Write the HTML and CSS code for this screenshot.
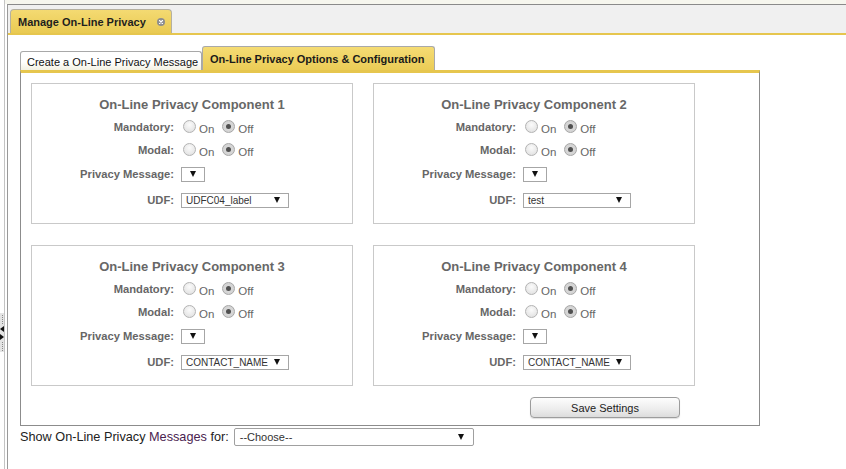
FILE: index.html
```html
<!DOCTYPE html>
<html lang="en">
<head>
<meta charset="utf-8">
<title>Manage On-Line Privacy</title>
<link rel="stylesheet" href="styles.css">
</head>
<body>
<div class="app">
  <div class="splitter">
    <div class="handle">
      <span class="dots"></span>
      <span class="arr arr-left"></span>
      <span class="arr arr-right"></span>
      <span class="dots"></span>
    </div>
  </div>
  <div class="frame">
    <div class="tabbar">
      <div class="main-tab">
        <span class="main-tab-label">Manage On-Line Privacy</span>
        <span class="close-icon">
          <svg width="8" height="8" viewBox="0 0 8 8"><circle cx="4" cy="4" r="4" fill="#8e8e8e"/><path d="M2.5 2.5 L5.5 5.5 M5.5 2.5 L2.5 5.5" stroke="#fff" stroke-width="1.1" stroke-linecap="round"/></svg>
        </span>
      </div>
    </div>
    <div class="content">
      <div class="subtabs">
        <div class="subtab">Create a On-Line Privacy Message</div>
        <div class="subtab active">On-Line Privacy Options &amp; Configuration</div>
      </div>
      <div class="panel">
        <div class="grid">
          <div class="comp">
            <div class="comp-title">On-Line Privacy Component 1</div>
            <div class="row r-radio"><span class="lbl">Mandatory:</span><span class="val"><span class="radio"></span><span class="opt">On</span><span class="radio checked"></span><span class="opt">Off</span></span></div>
            <div class="row r-radio"><span class="lbl">Modal:</span><span class="val"><span class="radio"></span><span class="opt">On</span><span class="radio checked"></span><span class="opt">Off</span></span></div>
            <div class="row r-sel"><span class="lbl">Privacy Message:</span><span class="val"><span class="sel sel-sm"><span class="tri"></span></span></span></div>
            <div class="row r-sel"><span class="lbl">UDF:</span><span class="val"><span class="sel sel-md"><span class="sel-text">UDFC04_label</span><span class="tri"></span></span></span></div>
          </div>
          <div class="comp">
            <div class="comp-title">On-Line Privacy Component 2</div>
            <div class="row r-radio"><span class="lbl">Mandatory:</span><span class="val"><span class="radio"></span><span class="opt">On</span><span class="radio checked"></span><span class="opt">Off</span></span></div>
            <div class="row r-radio"><span class="lbl">Modal:</span><span class="val"><span class="radio"></span><span class="opt">On</span><span class="radio checked"></span><span class="opt">Off</span></span></div>
            <div class="row r-sel"><span class="lbl">Privacy Message:</span><span class="val"><span class="sel sel-sm"><span class="tri"></span></span></span></div>
            <div class="row r-sel"><span class="lbl">UDF:</span><span class="val"><span class="sel sel-md"><span class="sel-text">test</span><span class="tri"></span></span></span></div>
          </div>
          <div class="comp">
            <div class="comp-title">On-Line Privacy Component 3</div>
            <div class="row r-radio"><span class="lbl">Mandatory:</span><span class="val"><span class="radio"></span><span class="opt">On</span><span class="radio checked"></span><span class="opt">Off</span></span></div>
            <div class="row r-radio"><span class="lbl">Modal:</span><span class="val"><span class="radio"></span><span class="opt">On</span><span class="radio checked"></span><span class="opt">Off</span></span></div>
            <div class="row r-sel"><span class="lbl">Privacy Message:</span><span class="val"><span class="sel sel-sm"><span class="tri"></span></span></span></div>
            <div class="row r-sel"><span class="lbl">UDF:</span><span class="val"><span class="sel sel-md"><span class="sel-text">CONTACT_NAME</span><span class="tri"></span></span></span></div>
          </div>
          <div class="comp">
            <div class="comp-title">On-Line Privacy Component 4</div>
            <div class="row r-radio"><span class="lbl">Mandatory:</span><span class="val"><span class="radio"></span><span class="opt">On</span><span class="radio checked"></span><span class="opt">Off</span></span></div>
            <div class="row r-radio"><span class="lbl">Modal:</span><span class="val"><span class="radio"></span><span class="opt">On</span><span class="radio checked"></span><span class="opt">Off</span></span></div>
            <div class="row r-sel"><span class="lbl">Privacy Message:</span><span class="val"><span class="sel sel-sm"><span class="tri"></span></span></span></div>
            <div class="row r-sel"><span class="lbl">UDF:</span><span class="val"><span class="sel sel-md"><span class="sel-text">CONTACT_NAME</span><span class="tri"></span></span></span></div>
          </div>
        </div>
        <div class="save-row">
          <button class="save-btn" type="button">Save Settings</button>
        </div>
      </div>
      <div class="show-row">
        <span class="show-label">Show On-Line Privacy <span class="visited">Messages</span> for:</span>
        <span class="sel sel-lg"><span class="sel-text">--Choose--</span><span class="tri"></span></span>
      </div>
    </div>
  </div>
</div>
</body>
</html>
```
FILE: styles.css
```css
* { box-sizing: border-box; }
html, body { margin: 0; padding: 0; background: #fff; }
body {
  font-family: "Liberation Sans", Arial, sans-serif;
  color: #222;
  width: 846px;
  height: 469px;
  overflow: hidden;
}
.app {
  display: flex;
  height: 469px;
  background: linear-gradient(#f6f6ee, #f6f6ee) top / 100% 4px no-repeat, #fff;
}
.splitter {
  width: 5px;
  flex: none;
  margin-right: 2px;
  border-right: 1px solid #c4c4c4;
  padding-top: 313px;
  background: #fff;
}
.handle {
  width: 4px;
  height: 39px;
  background: #e4e4e4;
  display: flex;
  flex-direction: column;
  align-items: center;
  gap: 2px;
  padding-top: 2px;
}
.dots {
  width: 1px;
  height: 9px;
  background: repeating-linear-gradient(#888 0 1px, transparent 1px 2px);
}
.arr { width: 0; height: 0; }
.arr-left { border-top: 3px solid transparent; border-bottom: 3px solid transparent; border-right: 4px solid #111; }
.arr-right { border-top: 3px solid transparent; border-bottom: 3px solid transparent; border-left: 4px solid #111; }

.frame {
  flex: 1;
  margin-top: 4px;
  border-top: 1px solid #8a8a8a;
  border-left: 1px solid #9a9a9a;
  display: flex;
  flex-direction: column;
}
.tabbar {
  height: 30px;
  background: #f0f0f0;
  border-bottom: 2px solid #e6c64e;
  padding: 4px 0 0 2px;
  display: flex;
  align-items: flex-end;
}
.main-tab {
  width: 162px;
  height: 24px;
  border: 1px solid #b4b0a0;
  border-bottom: none;
  border-radius: 4px 4px 0 0;
  background: linear-gradient(#f4da72, #e9ca52);
  display: flex;
  align-items: center;
  padding: 0 0 0 7px;
  font-size: 11px;
  font-weight: bold;
  color: #1e1e1e;
}
.main-tab-label { width: 139px; }
.close-icon { display: flex; width: 8px; height: 8px; margin-top: 1px; }

.content {
  flex: 1;
  padding: 11px 0 0 12px;
}
.subtabs {
  display: flex;
  align-items: flex-end;
  gap: 0;
  height: 24px;
}
.subtab {
  width: 182px;
  height: 19px;
  border: 1px solid #a8a8a8;
  border-bottom: none;
  border-radius: 3px 3px 0 0;
  background: linear-gradient(#ffffff 55%, #f3f1e2);
  font-size: 11px;
  color: #111;
  display: flex;
  align-items: center;
  padding: 2px 0 0 6px;
}
.subtab.active {
  width: 233px;
  height: 24px;
  border-color: #a9a9a9;
  background: linear-gradient(#f5dc74, #ebcc56);
  font-weight: bold;
  padding: 0 0 0 7px;
  color: #1a1a1a;
}
.panel {
  width: 740px;
  border: 1px solid #8c8c8c;
  border-top: 3px solid #e6c64e;
  padding: 10px 0 7px 10px;
}
.grid {
  display: grid;
  grid-template-columns: 322px 322px;
  column-gap: 20px;
  row-gap: 21px;
}
.comp {
  height: 141px;
  border: 1px solid #c9c9c9;
  padding-top: 13px;
}
.comp-title {
  text-align: center;
  font-size: 13px;
  line-height: 16px;
  font-weight: bold;
  color: #676767;
  margin-bottom: 2px;
}
.row {
  display: grid;
  grid-template-columns: 142px 1fr;
  column-gap: 7px;
  align-items: center;
}
.r-radio { height: 23px; }
.r-sel { height: 26px; }
.lbl {
  text-align: right;
  font-size: 11.2px;
  font-weight: bold;
  color: #666;
}
.val { display: flex; align-items: center; }
.radio {
  width: 13px;
  height: 13px;
  border-radius: 50%;
  border: 1px solid #b3b3b3;
  background: radial-gradient(circle at 50% 35%, #fbfbfb 0%, #e6e6e6 70%, #d8d8d8 100%);
  margin-left: 2px;
  display: flex;
  align-items: center;
  justify-content: center;
}
.radio + .opt { margin-left: 3px; }
.opt + .radio { margin-left: 8px; }
.radio.checked { background: radial-gradient(circle, #dcdcdc 0%, #cfcfcf 100%); border-color: #a6a6a6; }
.radio.checked::after {
  content: "";
  width: 5px;
  height: 5px;
  border-radius: 50%;
  background: #505050;
}
.opt {
  font-size: 11.5px;
  color: #666;
  padding-top: 5px;
}
.sel {
  display: inline-flex;
  align-items: center;
  justify-content: space-between;
  height: 15px;
  border: 1px solid #a6a6a6;
  background: #fff;
  font-size: 10px;
  color: #333;
}
.sel-sm { width: 24px; justify-content: center; padding-left: 0; }
.sel-md { width: 108px; padding: 0 8px 0 4px; }
.tri {
  width: 0;
  height: 0;
  border-left: 3.5px solid transparent;
  border-right: 3.5px solid transparent;
  border-top: 6px solid #111;
}
.sel-text { white-space: nowrap; }

.save-row {
  display: flex;
  margin-top: 11px;
}
.save-btn {
  margin-left: 499px;
  width: 150px;
  height: 21px;
  border: 1px solid #9c9c9c;
  border-radius: 4px;
  background: linear-gradient(#fdfdfd, #ececec 60%, #dcdcdc);
  box-shadow: 0 1px 1px rgba(0,0,0,0.12);
  font-family: "Liberation Sans", Arial, sans-serif;
  font-size: 11px;
  color: #222;
  padding: 0;
}
.show-row {
  display: flex;
  align-items: center;
  gap: 5px;
  margin-top: 2px;
  height: 18px;
}
.show-label {
  font-size: 12.7px;
  color: #222;
}
.visited { color: #4a2350; }
.sel-lg {
  width: 240px;
  height: 18px;
  border-radius: 2px;
  border-color: #a0a0a0;
  font-size: 11px;
  padding: 0 9px 0 5px;
}
```
